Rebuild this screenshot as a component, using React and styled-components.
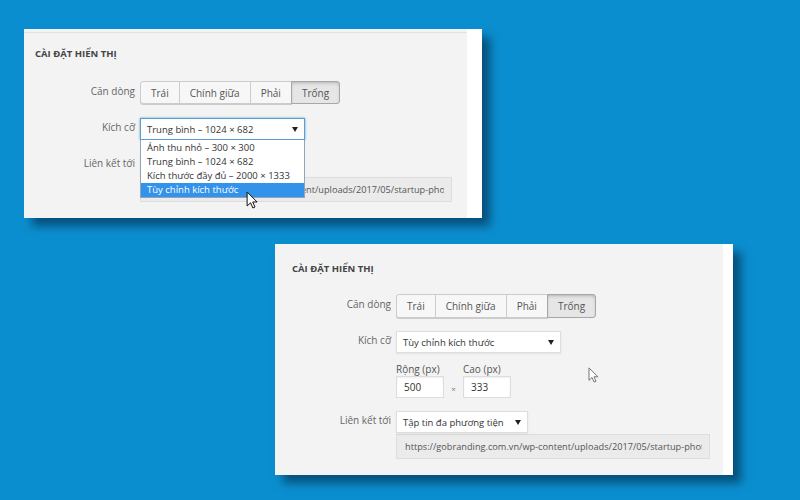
import React from "react";
import styled, { createGlobalStyle, css } from "styled-components";

const GlobalStyle = createGlobalStyle`
  html, body {
    margin: 0;
    padding: 0;
    background: #0b8ecf;
  }
  body {
    font-family: "Open Sans", "Noto Sans", sans-serif;
  }
`;

const Stage = styled.div`
  width: 800px;
  height: 500px;
  overflow: hidden;
  box-sizing: border-box;
  padding-top: 29px;
  display: flex;
  flex-direction: column;
  background: #0b8ecf;
`;

const Panel = styled.section`
  display: flex;
  width: 458px;
  height: ${(p) => p.$h}px;
  margin-left: ${(p) => p.$x}px;
  margin-top: ${(p) => p.$gap}px;
  flex-shrink: 0;
  box-shadow: 8px 8px 9px rgba(3, 38, 66, 0.6);
`;

const Body = styled.div`
  flex: 1;
  position: relative;
  background: #f3f3f3;
  box-sizing: border-box;
  padding: 18px 0 0 ${(p) => p.$pad}px;
  ${(p) =>
    p.$rule &&
    css`
      border-top: 3px solid #f3f3f3;
      box-shadow: inset 0 1px 0 #e2e2e2;
      padding-top: 15px;
    `}
`;

const Strip = styled.div`
  width: ${(p) => p.$w}px;
  background: #fff;
`;

const Title = styled.h2`
  margin: 0;
  font-size: 9.5px;
  line-height: 14px;
  font-weight: 700;
  color: #444;
  text-transform: uppercase;
`;

const Form = styled.div`
  display: grid;
  grid-template-columns: ${(p) => p.$labelW}px auto;
  column-gap: 5px;
  row-gap: ${(p) => p.$rowGap}px;
  align-items: start;
  justify-content: start;
  margin-top: ${(p) => p.$top}px;
`;

const Label = styled.div`
  text-align: right;
  font-size: 10px;
  color: #666;
  line-height: ${(p) => p.$h - 3}px;
  white-space: nowrap;
`;

const ButtonGroup = styled.div`
  display: flex;
  height: ${(p) => p.$h}px;
`;

const Button = styled.div`
  display: flex;
  align-items: center;
  padding: 0 10px;
  margin-left: -1px;
  border: 1px solid #ccc;
  background: #f7f7f7;
  color: #555;
  font-size: 10px;
  box-shadow: 0 1px 0 #ccc;
  &:first-child {
    margin-left: 0;
    border-radius: 3px 0 0 3px;
  }
  &:last-child {
    border-radius: 0 3px 3px 0;
  }
  ${(p) =>
    p.$pressed &&
    css`
      background: #e6e6e6;
      border-color: #a7a7a7;
      box-shadow: inset 0 2px 5px -3px rgba(0, 0, 0, 0.5);
      position: relative;
    `}
`;

const SelectWrap = styled.div`
  position: relative;
  width: ${(p) => p.$w}px;
`;

const Select = styled.div`
  box-sizing: border-box;
  height: 22px;
  display: flex;
  align-items: center;
  justify-content: space-between;
  padding: 0 6px;
  background: #fff;
  border: 1px solid #ddd;
  box-shadow: 0 1px 2px rgba(0, 0, 0, 0.07);
  font-size: 9.5px;
  color: #333;
  white-space: nowrap;
  ${(p) =>
    p.$focus &&
    css`
      border-color: #5b9dd9;
      box-shadow: 0 0 2px rgba(30, 140, 190, 0.8);
    `}
`;

const Arrow = styled.span`
  width: 0;
  height: 0;
  border-left: 3px solid transparent;
  border-right: 3px solid transparent;
  border-top: 5px solid #222;
  flex-shrink: 0;
`;

const Dropdown = styled.ul`
  position: absolute;
  top: 100%;
  left: 0;
  right: 0;
  z-index: 3;
  margin: 0;
  padding: 1px 0 0;
  list-style: none;
  background: #fff;
  border: 1px solid #93a4ba;
  border-top: none;
`;

const Option = styled.li`
  height: 14px;
  line-height: 14px;
  padding-left: 6px;
  font-size: 9.5px;
  color: #333;
  white-space: nowrap;
  ${(p) =>
    p.$active &&
    css`
      background: #3392ea;
      color: #fff;
    `}
`;

const Dims = styled.div`
  display: flex;
  margin-top: -3px;
`;

const DimField = styled.div`
  display: flex;
  flex-direction: column;
  gap: 1px;
`;

const DimLabel = styled.div`
  font-size: 10px;
  line-height: 12px;
  color: #555;
`;

const NumberBox = styled.div`
  box-sizing: border-box;
  width: 48px;
  height: 22px;
  padding-left: 7px;
  display: flex;
  align-items: center;
  background: #fff;
  border: 1px solid #ddd;
  box-shadow: inset 0 1px 2px rgba(0, 0, 0, 0.07);
  font-size: 10px;
  color: #333;
`;

const Times = styled.span`
  align-self: flex-end;
  width: 19px;
  line-height: 18px;
  text-align: center;
  font-size: 8px;
  color: #777;
`;

const LinkBlock = styled.div`
  display: flex;
  flex-direction: column;
  gap: 1px;
`;

const UrlBox = styled.div`
  box-sizing: border-box;
  width: ${(p) => p.$w}px;
  height: 25px;
  padding: 0 7px 0 8px;
  display: flex;
  align-items: center;
  background: #ebebeb;
  border: 1px solid #ddd;
  font-size: 9.2px;
  color: #555;
`;

const UrlText = styled.div`
  overflow: hidden;
  white-space: nowrap;
`;

const Cursor = styled.svg`
  position: absolute;
  left: ${(p) => p.$x}px;
  top: ${(p) => p.$y}px;
  z-index: 5;
`;

const URL =
  "https://gobranding.com.vn/wp-content/uploads/2017/05/startup-photo-team.jpg";

const sizes = [
  "Ảnh thu nhỏ – 300 × 300",
  "Trung bình – 1024 × 682",
  "Kích thước đầy đủ – 2000 × 1333",
  "Tùy chỉnh kích thước",
];

const ArrowCursor = ({ x, y, fill, stroke, h }) => (
  <Cursor $x={x} $y={y} width={h * 0.68} height={h} viewBox="0 0 12 18">
    <path
      d="M1 1 L1 15 L4.4 11.8 L6.8 17 L8.9 16 L6.6 11 L11 11 Z"
      fill={fill}
      stroke={stroke}
      strokeWidth="1"
      strokeLinejoin="round"
    />
  </Cursor>
);

const Alignment = ({ h }) => (
  <ButtonGroup $h={h}>
    <Button>Trái</Button>
    <Button>Chính giữa</Button>
    <Button>Phải</Button>
    <Button $pressed>Trống</Button>
  </ButtonGroup>
);

const SettingsPanel = ({ open }) => (
  <Panel $h={open ? 189 : 231} $x={open ? 24 : 275} $gap={open ? 0 : 26}>
    <Body $pad={open ? 11 : 17} $rule={open}>
      <Title>Cài đặt hiển thị</Title>
      <Form $labelW={open ? 100 : 99} $rowGap={open ? 14 : 13} $top={open ? 20 : 18}>
        <Label $h={open ? 23 : 24}>Căn dòng</Label>
        <Alignment h={open ? 23 : 24} />

        <Label $h={22}>Kích cỡ</Label>
        <SelectWrap $w={165}>
          <Select $focus={open}>
            {open ? sizes[1] : sizes[3]}
            <Arrow />
          </Select>
          {open && (
            <Dropdown>
              {sizes.map((s, i) => (
                <Option key={i} $active={i === 3}>
                  {s}
                </Option>
              ))}
            </Dropdown>
          )}
        </SelectWrap>

        {!open && (
          <>
            <span />
            <Dims>
              <DimField>
                <DimLabel>Rộng (px)</DimLabel>
                <NumberBox>500</NumberBox>
              </DimField>
              <Times>×</Times>
              <DimField>
                <DimLabel>Cao (px)</DimLabel>
                <NumberBox>333</NumberBox>
              </DimField>
            </Dims>
          </>
        )}

        <Label $h={22}>Liên kết tới</Label>
        <LinkBlock>
          <SelectWrap $w={132}>
            <Select>
              Tập tin đa phương tiện
              <Arrow />
            </Select>
          </SelectWrap>
          <UrlBox $w={open ? 312 : 314}>
            <UrlText>{URL}</UrlText>
          </UrlBox>
        </LinkBlock>
      </Form>
      {open ? (
        <ArrowCursor x={222} y={159} h={18} fill="#fff" stroke="#111" />
      ) : (
        <ArrowCursor x={313} y={123} h={16} fill="#fff" stroke="#666" />
      )}
    </Body>
    <Strip $w={open ? 15 : 10} />
  </Panel>
);

export default function App() {
  return (
    <>
      <GlobalStyle />
      <Stage>
        <SettingsPanel open />
        <SettingsPanel />
      </Stage>
    </>
  );
}
